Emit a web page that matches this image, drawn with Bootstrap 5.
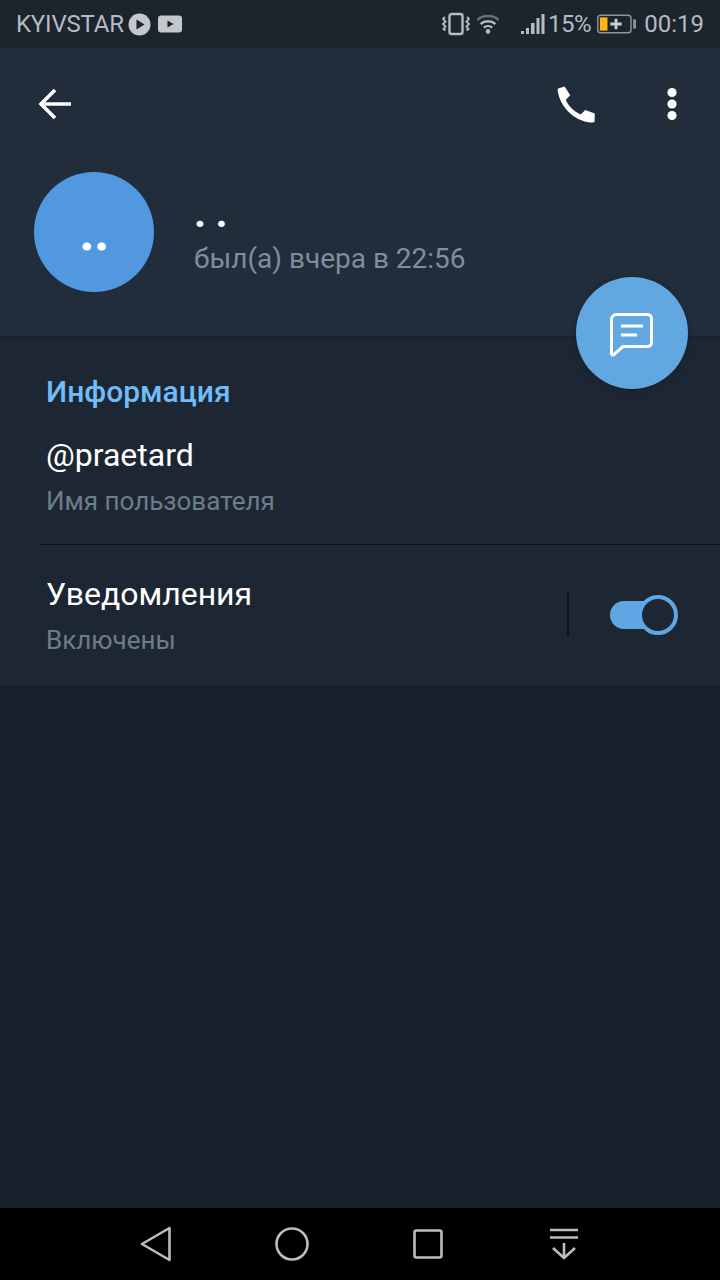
<!DOCTYPE html>
<html lang="ru">
<head>
    <meta charset="UTF-8">
    <title>Профиль</title>
    <link href="https://cdn.jsdelivr.net/npm/bootstrap@5.3.3/dist/css/bootstrap.min.css" rel="stylesheet">
    <script src="https://cdn.jsdelivr.net/npm/bootstrap@5.3.3/dist/js/bootstrap.bundle.min.js"></script>
    <style>
        html, body { height: 1280px; overflow: hidden; }
        body { background: #17202a; font-family: Roboto, "Noto Sans", sans-serif; color: #fff; }
        svg { display: block; flex: none; }
        .phone-page { height: 1280px; position: relative; }
        .status-strip { height: 48px; background: #1c242e; color: #b4bbc3; font-size: 24px; padding: 0 16px; }
        .carrier-name { letter-spacing: -.2px; }
        .charge-level { margin-left: 3px; letter-spacing: -.4px; }
        .profile-head { height: 288px; background: #212d3b; border-bottom: 2px solid #1a222c; box-sizing: content-box; }
        .tool-row { height: 112px; padding: 0 42px 0 38px; }
        .who-row { padding: 12px 0 0 34px; }
        .avatar-disc { width: 120px; height: 120px; border-radius: 50%; background: #5198e0; font-size: 54px; line-height: 1; font-weight: 700; letter-spacing: -1px; }
        .who-text { margin-left: 40px; }
        .who-name { font-size: 42px; font-weight: 700; line-height: 44px; height: 44px; margin-top: 3px; white-space: pre; letter-spacing: -.5px; }
        .who-seen { font-size: 28px; line-height: 36px; color: #7f8d9c; margin-top: 6px; }
        .float-btn { position: absolute; left: 576px; top: 277px; width: 112px; height: 112px; border-radius: 50%; background: #61a8e3; box-shadow: 0 1px 6px rgba(0,0,0,.25); }
        .chat-glyph { margin-top: 3px; }
        .info-block { height: 347px; background: #1d2733; padding-top: 36px; }
        .info-title { font-size: 30px; font-weight: 500; line-height: 36px; color: #71bcf8; padding-left: 46px; }
        .info-row { padding-left: 46px; }
        .row-main { font-size: 32px; line-height: 40px; }
        .row-sub { font-size: 26px; line-height: 32px; color: #6f7c8a; margin-top: 10px; }
        .row-one { padding-top: 25px; height: 134px; }
        .row-two { margin-left: 40px; padding: 29px 42px 0 6px; border-top: 1px solid #0d1218; }
        .thin-bar { width: 2px; height: 44px; background: #0f141a; margin-right: 41px; }
        .toggle-track { width: 68px; height: 40px; position: relative; }
        .toggle-track::before { content: ""; position: absolute; left: 0; top: 6px; width: 60px; height: 28px; border-radius: 14px; background: #5fa6e2; }
        .toggle-track::after { content: ""; position: absolute; right: 0; top: 0; width: 40px; height: 40px; border-radius: 50%; background: #1d2733; border: 4px solid #5fa6e2; }
        .nav-strip { position: absolute; left: 0; right: 0; bottom: 0; height: 72px; background: #000; }
        .nav-slot { width: 136px; }
    </style>
</head>
<body>
<div class="phone-page">

    <div class="status-strip d-flex align-items-center">
        <span class="carrier-name">KYIVSTAR</span>
        <svg class="ms-1" width="23" height="23" viewBox="0 0 23 23"><circle cx="11.5" cy="11.5" r="11" fill="#c3c8cd"/><path d="M8.5 6.5l8 5-8 5z" fill="#1c242e"/></svg>
        <svg style="margin-left:7px" width="24" height="18" viewBox="0 0 24 18"><rect width="24" height="17" y=".5" rx="3" fill="#c3c8cd"/><path d="M9.500 5.500l6 3.500-6 3.500z" fill="#1c242e"/></svg>

        <svg class="ms-auto" width="28" height="24" viewBox="0 0 28 24" fill="none" stroke="#b4bbc3" stroke-width="2.400"><rect x="7.500" y="2" width="13" height="20" rx="2"/><path d="M3 5l-2 2 2.500 2.500-2.500 2.500 2.500 2.500-2 2.500 2 1.500M25 5l2 2-2.500 2.500 2.500 2.500-2.500 2.500 2 2.500-2 1.500" stroke-width="1.900"/></svg>
        <svg style="margin-left:6px" width="24" height="22" viewBox="0 0 26 22" fill="none" stroke="#b4bbc3" stroke-width="2.600"><path d="M1.500 6.500C7.500 1 18.500 1 24.500 6.500" stroke="#66707b"/><path d="M5 11c4.500-4 11.500-4 16 0M8.500 14.800c2.500-2 6.500-2 9 0"/><circle cx="13" cy="19" r="2.500" fill="#b4bbc3" stroke="none"/></svg>
        <svg style="margin-left:21px" width="24" height="22" viewBox="0 0 24 22" fill="#b4bbc3"><rect x="0" y="18" width="3" height="3"/><rect x="5" y="15" width="3" height="6"/><rect x="10" y="10" width="3.500" height="11"/><rect x="15.500" y="5" width="3" height="16"/><rect x="20.500" y="1" width="3" height="20"/></svg>
        <span class="charge-level">15%</span>
        <svg style="margin-left:6px" width="39" height="20" viewBox="0 0 41 20"><rect x=".75" y=".75" width="35" height="18.500" rx="3" fill="none" stroke="#8b939c" stroke-width="1.500"/><rect x="3" y="3" width="8" height="14" fill="#fdb415"/><path d="M14 10h12M20 4.500v11" stroke="#c9ced3" stroke-width="3" fill="none"/><rect x="38" y="5" width="3" height="10" rx="1" fill="#8b939c"/></svg>
        <span style="margin-left:8px">00:19</span>
    </div>

    <div class="profile-head">
        <div class="tool-row d-flex align-items-center">
            <svg width="34" height="32" viewBox="0 0 34 32" fill="none" stroke="#fff" stroke-width="3.600"><path d="M33 16H3M17 2L3 16l14 14"/></svg>
            <svg class="ms-auto" width="38" height="38" viewBox="0 0 38 38"><path d="M7.600 1.500 1.200 3.500C.6 4 .5 5 .8 6.500 3.500 22 16 34.500 31.500 37.300c1.500.3 5 .6 6-.5l.3-8.300-9.500-3.500-4.600 4.400C17.500 27 11 20.500 8.800 14.700l4.400-4.500z" fill="#fff"/></svg>
            <svg style="margin-left:71px" width="12" height="34" viewBox="0 0 12 34" fill="#fff"><circle cx="6" cy="5.500" r="4.600"/><circle cx="6" cy="17" r="4.600"/><circle cx="6" cy="28.500" r="4.600"/></svg>
        </div>
        <div class="who-row d-flex align-items-center">
            <div class="avatar-disc d-flex align-items-center justify-content-center">..</div>
            <div class="who-text">
                <div class="who-name">. .</div>
                <div class="who-seen">был(а) вчера в 22:56</div>
            </div>
        </div>
    </div>

    <div class="float-btn d-flex align-items-center justify-content-center">
        <svg class="chat-glyph" width="44" height="44" viewBox="0 0 44 44" fill="none" stroke="#fff" stroke-width="3"><path d="M6.500 1.500h31a4 4 0 0 1 4 4v24a4 4 0 0 1-4 4H13L3.500 41.800c-.8.600-2 .1-2-1V6.500a5 5 0 0 1 5-5z" stroke-linejoin="round"/><path d="M11 13h22M11 22h16"/></svg>
    </div>

    <div class="info-block">
        <div class="info-title">Информация</div>
        <div class="info-row row-one">
            <div class="row-main">@praetard</div>
            <div class="row-sub">Имя пользователя</div>
        </div>
        <div class="row-two d-flex">
            <div>
                <div class="row-main">Уведомления</div>
                <div class="row-sub">Включены</div>
            </div>
            <div class="ms-auto d-flex align-items-center align-self-center">
                <div class="thin-bar"></div>
                <div class="toggle-track"></div>
            </div>
        </div>
    </div>

    <div class="nav-strip d-flex align-items-center justify-content-center">
        <div class="nav-slot d-flex justify-content-center">
            <svg width="32" height="36" viewBox="0 0 32 36" fill="none" stroke="#bdbdbd" stroke-width="2.600" stroke-linejoin="round"><path d="M29.500 2 2 18l27.500 16z"/></svg>
        </div>
        <div class="nav-slot d-flex justify-content-center">
            <svg width="34" height="34" viewBox="0 0 34 34" fill="none" stroke="#bdbdbd" stroke-width="2.600"><circle cx="17" cy="17" r="15.500"/></svg>
        </div>
        <div class="nav-slot d-flex justify-content-center">
            <svg width="30" height="30" viewBox="0 0 30 30" fill="none" stroke="#bdbdbd" stroke-width="2.600"><rect x="1.500" y="1.500" width="27" height="27" rx="2"/></svg>
        </div>
        <div class="nav-slot d-flex justify-content-center">
            <svg width="28" height="32" viewBox="0 0 28 32" fill="none" stroke="#bdbdbd" stroke-width="2.600"><path d="M0 2h28M0 9.500h28M14 15v15M3 20l11 10 11-10"/></svg>
        </div>
    </div>

</div>
</body>
</html>
